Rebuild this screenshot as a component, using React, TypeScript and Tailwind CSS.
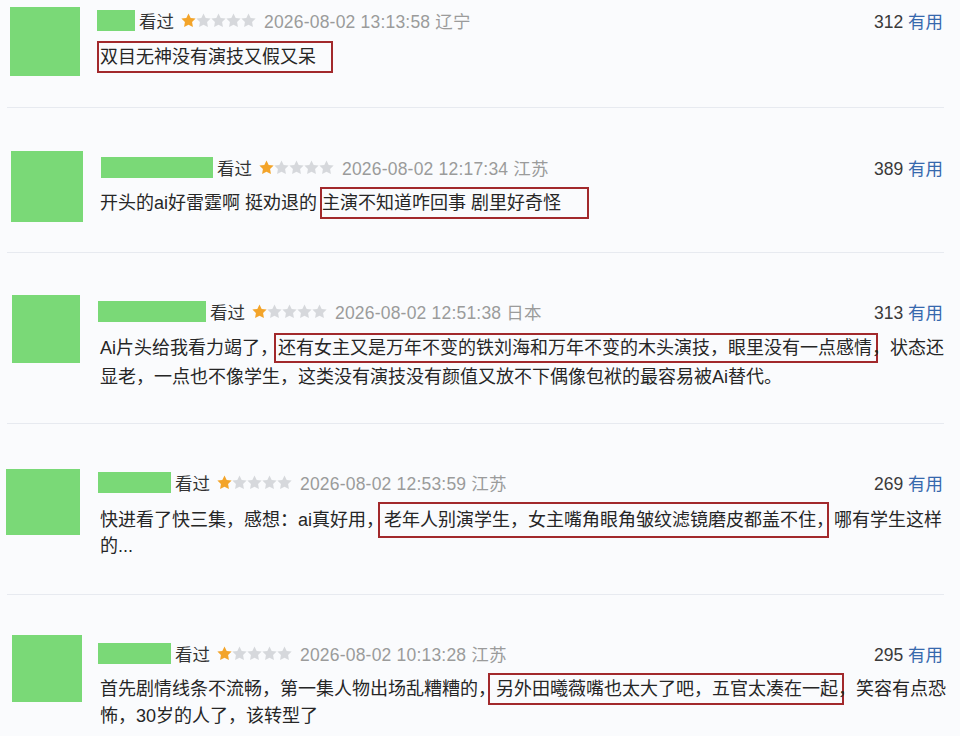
import React from "react";

type Row = {
  h: string;
  av: string;
  ct: string;
  nameCls: string;
  count: number;
  meta: string;
  cm: string;
  body: React.ReactNode;
};

const Box: React.FC<{ cls: string; children: React.ReactNode }> = ({ cls, children }) => (
  <span className={"border-2 border-[#a2292c] " + cls}>{children}</span>
);

const Star: React.FC<{ on?: boolean }> = ({ on }) => (
  <svg width="15" height="15" viewBox="0 0 24 24" className="shrink-0">
    <path
      d="M12 0.6l3.5 7.2 7.9 1.1-5.7 5.5 1.4 7.9L12 18.6l-7.1 3.7 1.4-7.9L0.6 8.9l7.9-1.1z"
      fill={on ? "#f3a42a" : "#d6d8dc"}
    />
  </svg>
);

const rows: Row[] = [
  {
    h: "h-[108px]",
    av: "ml-[3px] mt-[7px] w-[70px] h-[69px]",
    ct: "ml-[17px] mt-[10px]",
    nameCls: "w-[38px]",
    count: 312,
    meta: "2026-08-02 13:13:58 辽宁",
    cm: "mt-[12px] pl-[3px] leading-[29px]",
    body: (
      <div className="whitespace-nowrap">
        <Box cls="-ml-[3px] pl-[1px] pr-[15px] py-[4px]">双目无神没有演技又假又呆</Box>
      </div>
    ),
  },
  {
    h: "h-[145px]",
    av: "ml-[4px] mt-[43px] w-[72px] h-[71px]",
    ct: "ml-[15px] mt-[49px]",
    nameCls: "w-[112px] ml-[3px]",
    count: 389,
    meta: "2026-08-02 12:17:34 江苏",
    cm: "mt-[11px] pl-[2px] leading-[29px]",
    body: (
      <div className="whitespace-nowrap">
        开头的ai好雷霆啊 挺劝退的 <Box cls="-ml-[2px] pr-[26px] py-[4px]">主演不知道咋回事 剧里好奇怪</Box>
      </div>
    ),
  },
  {
    h: "h-[171px]",
    av: "ml-[5px] mt-[42px] w-[68px] h-[68px]",
    ct: "ml-[18px] mt-[48px]",
    nameCls: "w-[108px]",
    count: 313,
    meta: "2026-08-02 12:51:38 日本",
    cm: "mt-[12px] pl-[2px] leading-[29px]",
    body: (
      <>
        <div className="whitespace-nowrap">
          Ai片头给我看力竭了，
          <Box cls="-ml-[4px] pl-[2px] pr-[4px] -mr-[6px] py-[3px]">
            还有女主又是万年不变的铁刘海和万年不变的木头演技，眼里没有一点感情
          </Box>
          ，状态还
        </div>
        <div className="whitespace-nowrap">显老，一点也不像学生，这类没有演技没有颜值又放不下偶像包袱的最容易被Ai替代。</div>
      </>
    ),
  },
  {
    h: "h-[171px]",
    av: "-ml-[1px] mt-[45px] w-[74px] h-[66px]",
    ct: "ml-[18px] mt-[48px]",
    nameCls: "w-[73px]",
    count: 269,
    meta: "2026-08-02 12:53:59 江苏",
    cm: "mt-[14px] pl-[2px] leading-[26px]",
    body: (
      <>
        <div className="whitespace-nowrap">
          快进看了快三集，感想：ai真好用，
          <Box cls="-ml-[6px] pl-[4px] pr-[11px] -mr-[13px] py-[6px]">
            老年人别演学生，女主嘴角眼角皱纹滤镜磨皮都盖不住
          </Box>
          ，哪有学生这样
        </div>
        <div className="whitespace-nowrap">的...</div>
      </>
    ),
  },
  {
    h: "h-[141px]",
    av: "ml-[5px] mt-[40px] w-[70px] h-[67px]",
    ct: "ml-[16px] mt-[48px]",
    nameCls: "w-[73px]",
    count: 295,
    meta: "2026-08-02 10:13:28 江苏",
    cm: "mt-[12px] pl-[2px] leading-[27px]",
    body: (
      <>
        <div className="whitespace-nowrap">
          首先剧情线条不流畅，第一集人物出场乱糟糟的，
          <Box cls="-ml-[8px] pl-[6px] pr-[4px] -mr-[6px] py-[4px]">
            另外田曦薇嘴也太大了吧，五官太凑在一起
          </Box>
          ，笑容有点恐
        </div>
        <div className="whitespace-nowrap">怖，30岁的人了，该转型了</div>
      </>
    ),
  },
];

const ReviewRow: React.FC<{ r: Row; last: boolean }> = ({ r, last }) => (
  <div className={"flex items-start " + r.h + (last ? "" : " border-b border-[#e7eaf0]")}>
    <div className={"shrink-0 bg-[#7ad977] " + r.av} />
    <div className={"flex-1 min-w-0 " + r.ct}>
      <div className="flex items-center h-[21px] text-[17.5px]">
        <div className={"h-[21px] bg-[#7ad977] shrink-0 " + r.nameCls} />
        <span className="ml-[4px] pt-[3px] text-[#333]">看过</span>
        <span className="ml-[7px] flex">
          <Star on />
          <Star />
          <Star />
          <Star />
          <Star />
        </span>
        <span className="ml-[8px] pt-[3px] text-[#9b9b9b] tracking-[0.2px]">{r.meta}</span>
        <span className="ml-auto pt-[3px] pr-[1px] whitespace-nowrap">
          <span className="text-[#3a3a3a]">{r.count}</span>{" "}
          <span className="text-[#3668ad]">有用</span>
        </span>
      </div>
      <div className={"text-[18px] text-[#262626] " + r.cm}>{r.body}</div>
    </div>
  </div>
);

export default function App() {
  return (
    <div className="w-[960px] h-[736px] overflow-hidden bg-[#fafbfd] pl-[7px] pr-[16px] font-['Liberation_Sans','Noto_Sans_CJK_SC',sans-serif]">
      {rows.map((r, i) => (
        <ReviewRow key={i} r={r} last={i === rows.length - 1} />
      ))}
    </div>
  );
}
